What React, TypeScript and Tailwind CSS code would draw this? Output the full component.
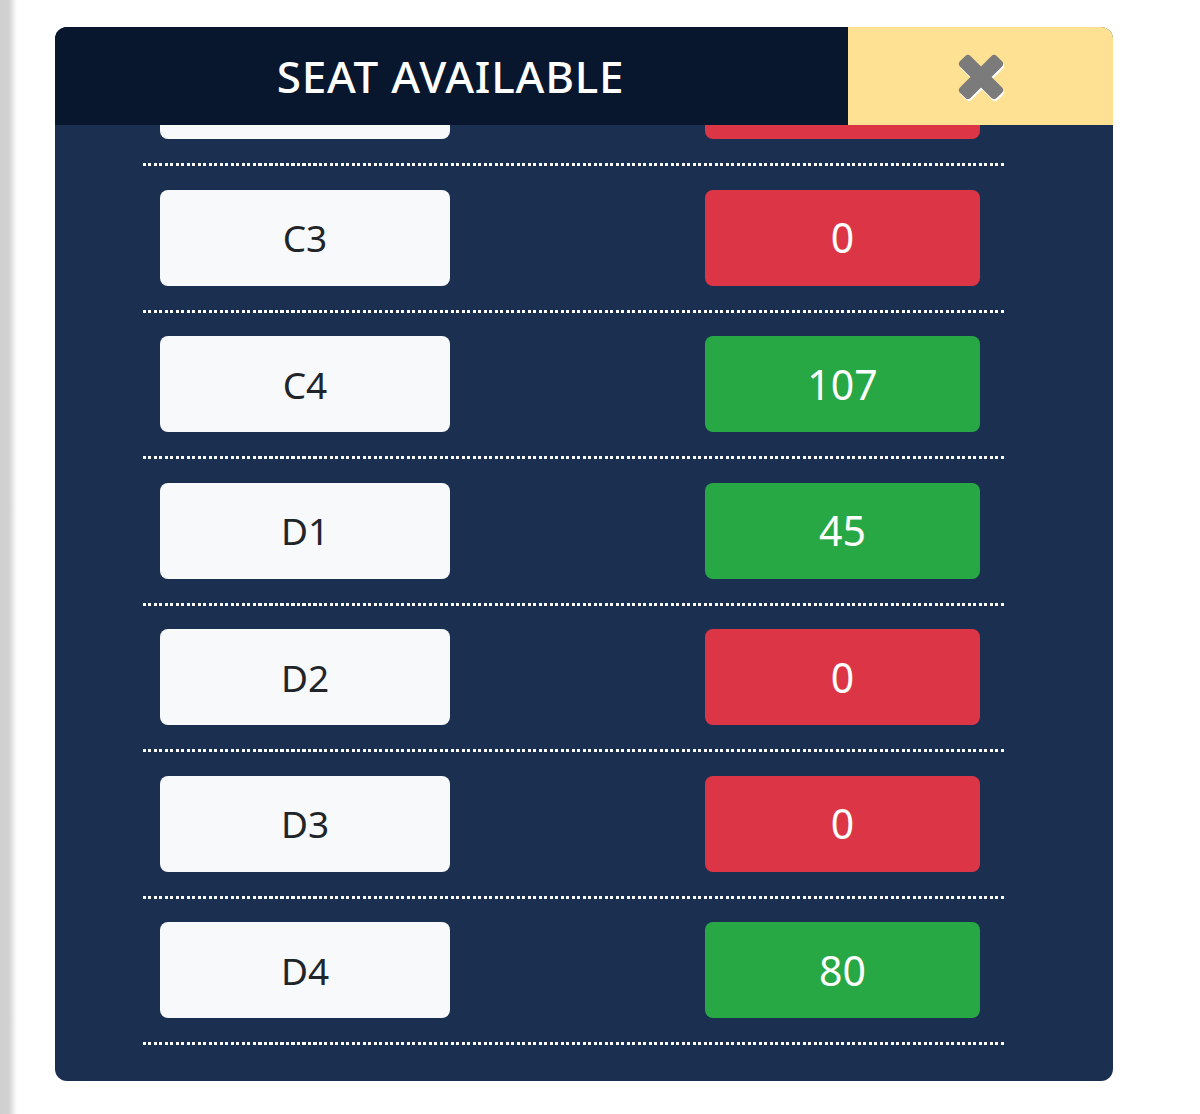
import { useLayoutEffect, useRef } from 'react'

interface Seat {
  zone: string
  available: number
}

const seats: Seat[] = [
  { zone: 'C1', available: 0 },
  { zone: 'C2', available: 0 },
  { zone: 'C3', available: 0 },
  { zone: 'C4', available: 107 },
  { zone: 'D1', available: 45 },
  { zone: 'D2', available: 0 },
  { zone: 'D3', available: 0 },
  { zone: 'D4', available: 80 },
]

const font = { fontFamily: '"Noto Sans", "Open Sans", sans-serif' }

function CloseIcon() {
  return (
    <svg width="58" height="58" viewBox="0 0 58 58">
      <g transform="translate(30 31) rotate(45)">
        <rect x="-26" y="-7.5" width="52" height="15" rx="4" fill="#ffffff" />
        <rect x="-7.5" y="-26" width="15" height="52" rx="4" fill="#ffffff" />
      </g>
      <g transform="translate(29 29) rotate(45)">
        <rect x="-26" y="-7.5" width="52" height="15" rx="4" fill="#7b7b7b" />
        <rect x="-7.5" y="-26" width="15" height="52" rx="4" fill="#7b7b7b" />
      </g>
    </svg>
  )
}

function SeatRow({ seat }: { seat: Seat }) {
  const full = seat.available === 0
  return (
    <div>
      <div className="flex items-center justify-between pr-[25px] pl-[17px] py-[23.75px]">
        <div className="flex h-[96px] w-[290px] items-center justify-center rounded-[8px] bg-[#f8f9fa] text-[37px] text-[#212529]">
          {seat.zone}
        </div>
        <div
          className={`flex h-[96px] w-[275px] items-center justify-center rounded-[8px] text-[41px] text-white ${
            full ? 'bg-[#dc3545]' : 'bg-[#28a745]'
          }`}
        >
          {seat.available}
        </div>
      </div>
      <div className="h-[3px] w-full bg-[repeating-linear-gradient(90deg,#ffffff_0_3px,transparent_3px_5.5px)]" />
    </div>
  )
}

export default function App() {
  const listRef = useRef<HTMLDivElement>(null)

  useLayoutEffect(() => {
    if (listRef.current) listRef.current.scrollTop = listRef.current.scrollHeight
  }, [])

  return (
    <div className="flex h-[1114px] w-full bg-white" style={font}>
      <div className="w-[18px] shrink-0 bg-[linear-gradient(90deg,#cfcfcf_0,#d2d2d2_9px,#ffffff_17px)]" />
      <div className="pl-[37px] pt-[27px]">
        <div className="flex h-[1054px] w-[1058px] flex-col overflow-hidden rounded-[12px] bg-[#1b2f50]">
          <div className="flex h-[98px] shrink-0">
            <div className="flex flex-1 items-center justify-center bg-[#08172e] pr-[2px] text-[44px] font-medium tracking-[0.8px] text-white">
              SEAT AVAILABLE
            </div>
            <button className="flex w-[265px] items-center justify-center bg-[#ffe194] pt-[2px]">
              <CloseIcon />
            </button>
          </div>
          <div
            ref={listRef}
            className="min-h-0 flex-1 overflow-y-auto pr-[108px] pb-[36px] pl-[88px] [scrollbar-width:none]"
          >
            {seats.map((seat) => (
              <SeatRow key={seat.zone} seat={seat} />
            ))}
          </div>
        </div>
      </div>
    </div>
  )
}
